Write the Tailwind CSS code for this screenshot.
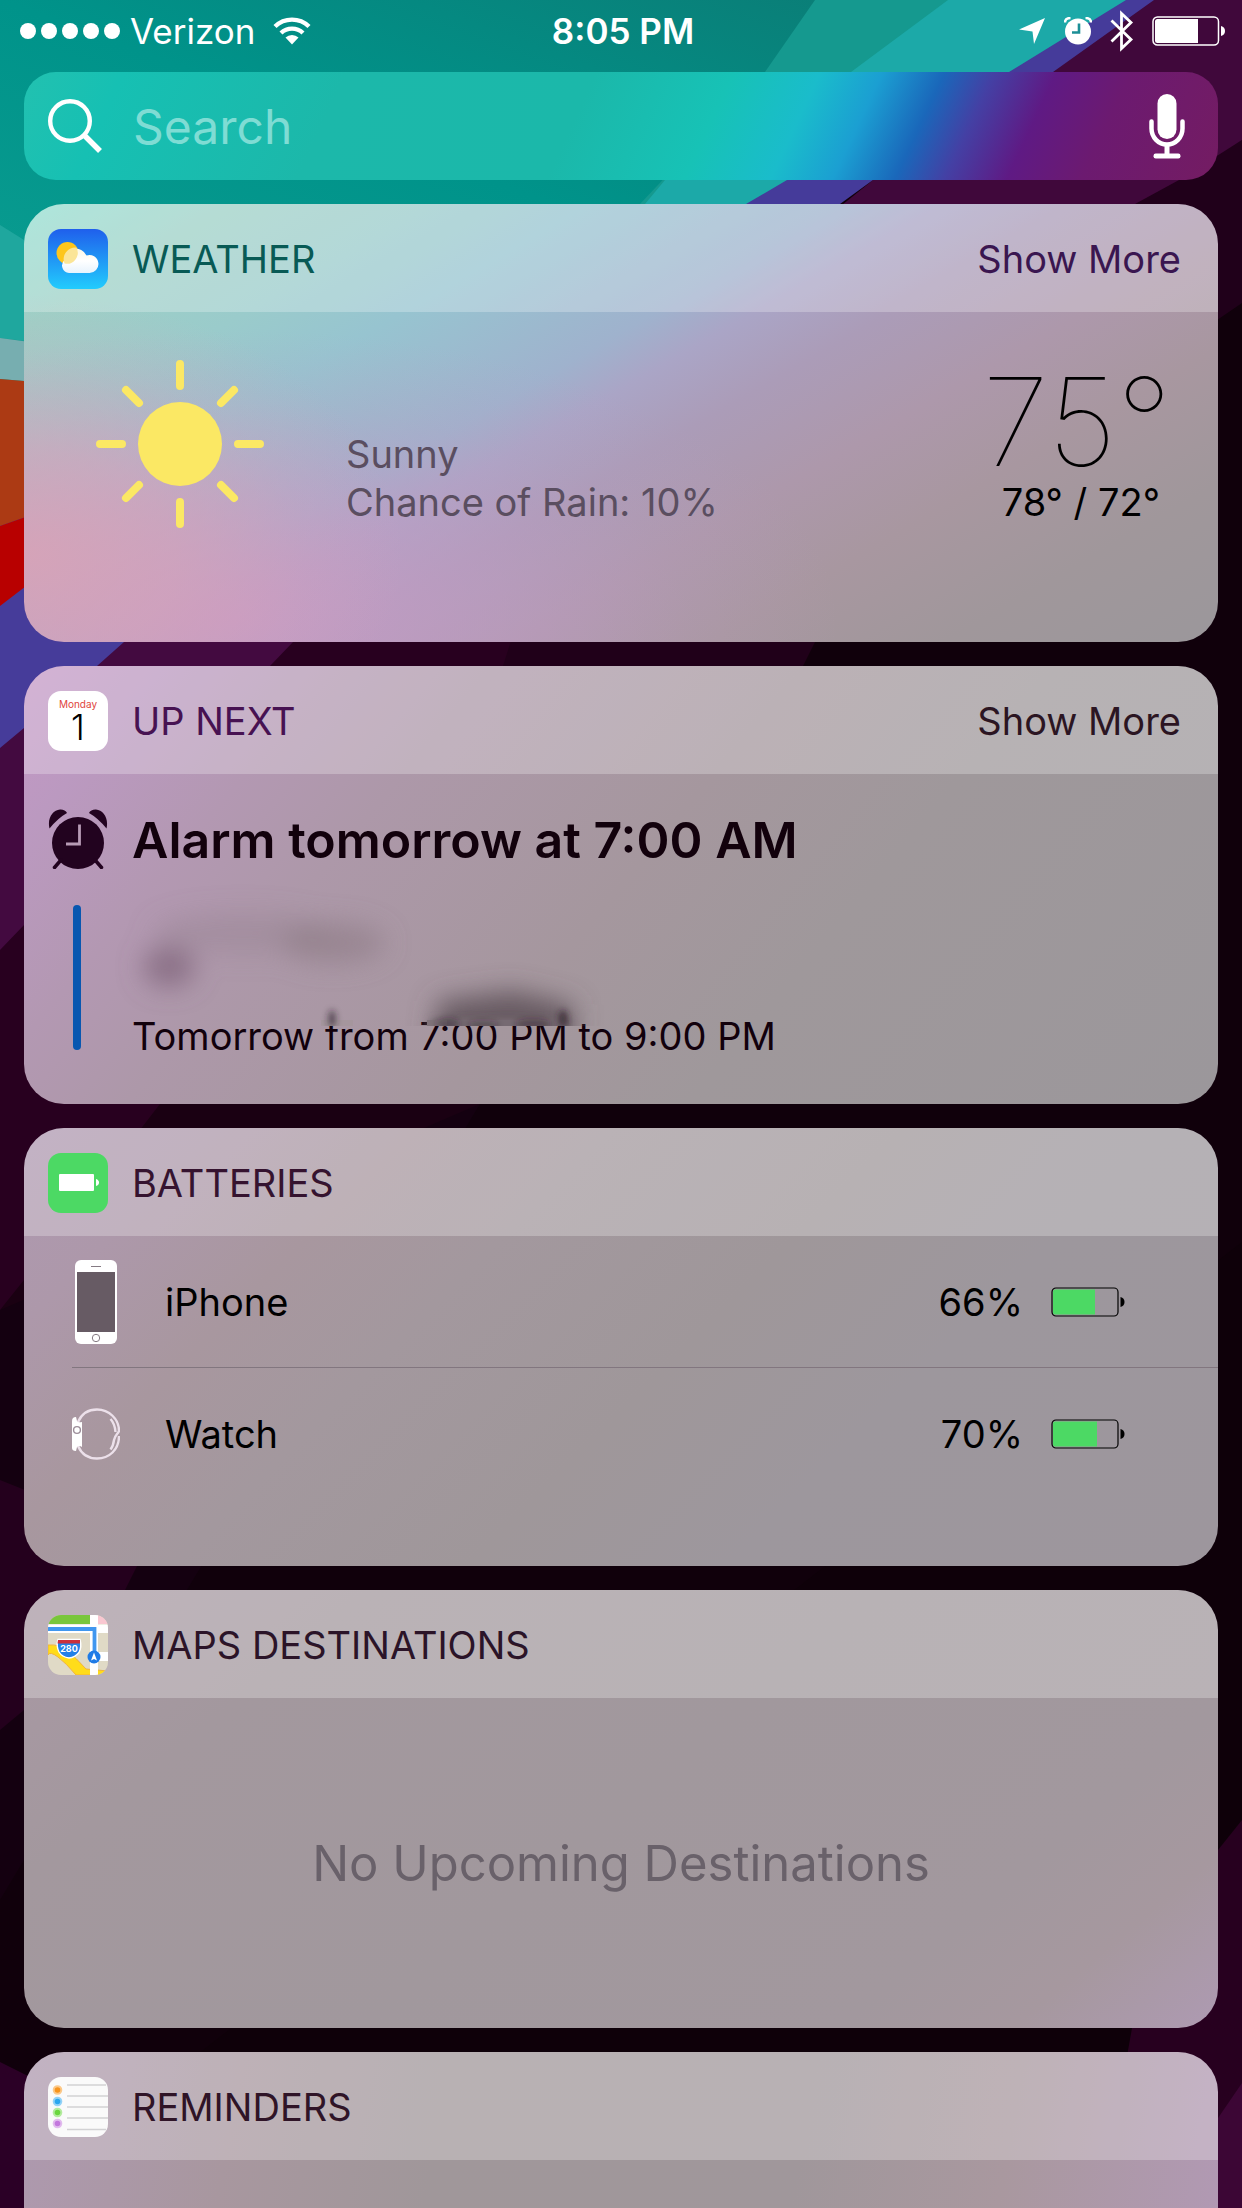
<!DOCTYPE html>
<html lang="en">
<head>
<meta charset="utf-8">
<meta name="viewport" content="width=device-width, initial-scale=1">
<title>Widgets</title>
<script src="https://cdn.jsdelivr.net/npm/@tailwindcss/browser@4"></script>
</head>
<body class="bg-[#0e0009] font-['Inter','Liberation_Sans',sans-serif] text-[38px] leading-[48px] text-black">
<div class="relative isolate flex min-h-screen flex-col overflow-hidden">

  <!-- Wallpaper -->
  <svg class="absolute inset-0 -z-10 h-full w-full" viewBox="0 0 1242 2208" preserveAspectRatio="none" aria-hidden="true">
    <defs>
      <linearGradient id="teal" x1="0" y1="1" x2="1" y2="0"><stop offset="0" stop-color="#0a9c90"/><stop offset=".5" stop-color="#00938a"/><stop offset="1" stop-color="#0a7f78"/></linearGradient>
    </defs>
    <rect width="1242" height="2208" fill="#0e0009"/>
    <path d="M0 0H1242V1242L0 2208Z" fill="#10000b"/>
    <path d="M0 1310 24 1270 140 1104H480L0 1900Z" fill="#140010"/>
    <path d="M0 700H815L803 666 480 1104 0 1310Z" fill="#1a0012"/>
    <path d="M0 500H815L815 642 803 666H500L0 1104Z" fill="#200019"/>
    <path d="M0 600H524L503 666 160 1104 24 1280 0 1310Z" fill="#28001f"/>
    <path d="M0 600H300L293 642 270 666 24 925 0 950Z" fill="#430a40"/>
    <path d="M1242 0V303L1100 400 900 400 1135 203 1242 140Z" fill="#20001a"/>
    <path d="M1100 0H1242V140L1179 180 1135 204 900 400H600L873 180Z" fill="#40083b"/>
    <path d="M1100 0H1154L1053 72 873 180 840 204 400 400V204Z" fill="#453b9a"/>
    <path d="M0 500 400 400 160 610 97 666 24 728 0 748Z" fill="#463c9a"/>
    <path d="M0 0H1126L1009 72 787 180 746 204 400 400H0Z" fill="#1ca9a8"/>
    <path d="M0 0H948L851 72 665 180 645 204 400 400H0Z" fill="#15998f"/>
    <path d="M0 0H815L765 72 640 204 400 300 24 240 0 225Z" fill="url(#teal)"/>
    <path d="M0 225 24 240 60 260V345L0 338Z" fill="#1fa79e"/>
    <path d="M0 338 60 346V384L0 379Z" fill="#77aeb0"/>
    <path d="M0 379 60 384V505L0 526Z" fill="#ac3a14"/>
    <path d="M0 526 60 505V560L0 606Z" fill="#b80000"/>
    <path d="M0 1480 150 1540 125 1590 24 1710 0 1730Z" fill="#24001d"/>
    <path d="M0 2062 40 2082V2208H0Z" fill="#2b0026"/>
    <path d="M1242 1820 1218 1850 1132 2028 1100 2208H1242Z" fill="#27001f"/>
    <path d="M1242 2083 1218 2118 1180 2208H1242Z" fill="#3c0635"/>
  </svg>

  <!-- Status bar -->
  <header class="grid h-[60px] shrink-0 grid-cols-3 items-center pl-5 pr-4 pt-[2px] text-[35px] leading-[44px] text-white">
    <div class="flex items-center">
      <span class="mr-[10px] flex gap-[5px]" role="img" aria-label="Signal strength: five of five">
        <i class="size-4 rounded-full bg-white"></i><i class="size-4 rounded-full bg-white"></i><i class="size-4 rounded-full bg-white"></i><i class="size-4 rounded-full bg-white"></i><i class="size-4 rounded-full bg-white"></i>
      </span>
      <span>Verizon</span>
      <svg class="ml-[18px] h-[28px] w-[38px]" viewBox="0 0 38 28" aria-label="Wi-Fi">
        <g fill="none" stroke="#fff" stroke-width="4.4"><path d="M2 9.500A24.500 24.500 0 0 1 36 9.500"/><path d="M8 16A16 16 0 0 1 30 16"/></g>
        <path fill="#fff" d="M12.500 20.500A9.500 9.500 0 0 1 25.500 20.500L19 27.500Z"/>
      </svg>
    </div>
    <time class="text-center font-semibold">8:05 PM</time>
    <div class="flex items-center justify-end">
      <svg class="mr-[18px] h-[28px] w-[28px]" viewBox="0 0 28 28" aria-label="Location"><path fill="#fff" d="M27 1 16 27 14.500 14.500 1 12.500Z"/></svg>
      <svg class="mr-[18px] h-[28px] w-[28px]" viewBox="0 0 28 28" aria-label="Alarm set">
        <circle cx="14" cy="14.500" r="13" fill="#fff"/>
        <path d="M1 5.500Q1 1 6.500 1M27 5.500Q27 1 21.500 1" fill="none" stroke="#fff" stroke-width="2.500"/>
        <path d="M15 6.500V15.500H8" fill="none" stroke="#1c8f96" stroke-width="2.600"/>
      </svg>
      <svg class="mr-[18px] h-[42px] w-[24px]" viewBox="0 0 24 42" aria-label="Bluetooth"><path d="M1.500 10.500 21 29.500 11.500 38.500V3.500L21 12.500 1.500 31.500" fill="none" stroke="#fff" stroke-width="2.800"/></svg>
      <svg class="h-[30px] w-[74px]" viewBox="0 0 74 30" aria-label="Battery 66%">
        <rect x="1" y="1" width="65.500" height="28" rx="4.500" fill="none" stroke="#fff" stroke-width="1.500"/>
        <path d="M5.500 3H46V27H5.500A2.500 2.500 0 0 1 3 24.500V5.500A2.500 2.500 0 0 1 5.500 3Z" fill="#fff"/>
        <path d="M69 10Q73 11 73 15T69 20Z" fill="#fff"/>
      </svg>
    </div>
  </header>

  <main class="flex grow flex-col gap-6 px-6 pt-3">

    <!-- Search -->
    <form role="search" class="flex h-[108px] items-center rounded-[32px] bg-[linear-gradient(115deg,#22c1b0_0%,#16c0b3_8%,#1cb8aa_26%,#1bb8aa_46%,#17c2b6_57%,#1abccb_64%,#1b9fd2_69%,#1a67ba_74%,#4440a4_78%,#5f1a84_83%,#6c1a70_89%,#741c62_100%)] pl-6 pr-[33px]">
      <label for="q" class="mr-[31px]">
        <svg class="h-[54px] w-[54px]" viewBox="0 0 54 54" aria-label="Search"><circle cx="22" cy="22" r="19.800" fill="none" stroke="#fff" stroke-width="4.400"/><path d="M36.500 36.500 52 52" stroke="#fff" stroke-width="5.500"/></svg>
      </label>
      <input id="q" type="search" placeholder="Search" class="min-w-0 grow bg-transparent pt-[2px] text-[48px] leading-[64px] text-white outline-none placeholder:text-[#7fdcd4]">
      <button type="button" aria-label="Dictate">
        <svg class="h-[66px] w-[36px]" viewBox="0 0 36 66"><rect x="8.500" y="1" width="19" height="45" rx="9.500" fill="#fff"/><path d="M2.500 28.500V35.500A15.500 16 0 0 0 33.500 35.500V28.500" fill="none" stroke="#fff" stroke-width="4.500" stroke-linecap="round"/><path d="M18 52V62" stroke="#fff" stroke-width="5"/><rect x="4.500" y="60.500" width="27" height="5" rx="2.200" fill="#fff"/></svg>
      </button>
    </form>

    <!-- Weather -->
    <section class="flex flex-col overflow-hidden rounded-[40px] bg-[radial-gradient(ellipse_380px_260px_at_0_80%,#dba2b6dd_0%,#daa3b899_40%,#d8a4bb33_75%,#d8a4bb00_100%),radial-gradient(ellipse_600px_290px_at_18%_95%,#c49bc4_0%,#c09cc499_40%,#bb9dc033_75%,#bb9dc000_100%),linear-gradient(150deg,#93ded0_0%,#9dd0c6_11%,#9acbcb_21%,#97c4d0_29%,#9fb2cd_42%,#aaa5c6_47%,#ab9cb8_54%,#ad98ab_64%,#a897a0_74%,#a0979b_86%,#9b979b_100%)]">
      <div class="flex h-[108px] items-center bg-white/25 px-6 pt-[2px]">
        <svg class="mr-6 size-[60px]" viewBox="0 0 60 60" aria-hidden="true">
          <defs>
            <linearGradient id="sky" x1="0" y1="0" x2="0" y2="1"><stop offset="0" stop-color="#1f5fec"/><stop offset="1" stop-color="#22ccfd"/></linearGradient>
            <linearGradient id="cloud" x1="0" y1="0" x2="0" y2="1"><stop offset="0" stop-color="#fdf8e4"/><stop offset=".5" stop-color="#fff"/><stop offset="1" stop-color="#e8f3fd"/></linearGradient>
          </defs>
          <rect width="60" height="60" rx="13" fill="url(#sky)"/>
          <circle cx="19.500" cy="24" r="11" fill="#fdc61c"/>
          <path d="M21 44A7.500 7.500 0 0 1 16.500 31A11.500 11.500 0 0 1 38.500 26.500A9 9 0 1 1 41 44Z" fill="url(#cloud)"/>
          <path d="M16.500 34.500A11.500 11.500 0 0 1 28.500 18.700 11 11 0 0 1 16.500 34.500Z" fill="#fbe597"/>
        </svg>
        <h2 class="grow text-[#085a55]">WEATHER</h2>
        <button type="button" class="mr-[13px] text-[#3a1650]">Show More</button>
      </div>
      <div class="flex h-[330px] pl-[72px] pr-[46px] pt-12">
        <svg class="size-[168px]" viewBox="0 0 168 168" aria-hidden="true">
          <circle cx="84" cy="84" r="42" fill="#fbe864"/>
          <path d="M84 4V26M84 142V164M4 84H26M142 84H164M30 30 43 43M125 125 138 138M138 30 125 43M43 125 30 138" stroke="#fbe864" stroke-width="8" stroke-linecap="round"/>
        </svg>
        <div class="ml-[82px] grow pt-[70px] text-[#5a4e60]">
          <p>Sunny</p>
          <p>Chance of Rain: 10%</p>
        </div>
        <div class="flex flex-col items-end pt-[6px]">
          <p class="text-[122px] font-thin leading-[112px]">75°</p>
          <p class="mr-3">78° / 72°</p>
        </div>
      </div>
    </section>

    <!-- Up next -->
    <section class="flex flex-col overflow-hidden rounded-[40px] bg-[linear-gradient(130deg,#c598c6_0%,#bb99c0_9%,#b398b2_20%,#ad98a9_30%,#a5979e_50%,#9f989b_66%,#9b979b_100%)]">
      <div class="flex h-[108px] items-center bg-white/25 px-6 pt-[2px]">
        <div class="mr-6 flex size-[60px] flex-col items-center rounded-[13px] bg-white pt-[7px]" aria-hidden="true">
          <span class="text-[10px] leading-[13px] text-[#e0453c]">Monday</span>
          <span class="text-[35px] font-light leading-[32px]">1</span>
        </div>
        <h2 class="grow text-[#471252]">UP NEXT</h2>
        <button type="button" class="mr-[13px] text-[#2b1522]">Show More</button>
      </div>
      <div class="h-[330px] pl-6 pt-[35px]">
        <div class="flex h-[60px] items-center">
          <svg class="mr-6 size-[60px]" viewBox="0 0 60 60" aria-hidden="true">
            <g fill="#22031f"><circle cx="30" cy="34" r="26"/><path d="M1.500 19.500C-1 9 5 1 12 .5 15 .3 18 1.500 19 4Q10 9 1.500 19.500ZM58.500 19.500C61 9 55 1 48 .5 45 .3 42 1.500 41 4Q50 9 58.500 19.500Z"/></g>
            <path d="M13 51 6.500 58.500M47 51 53.500 58.500" stroke="#22031f" stroke-width="3.500" stroke-linecap="round"/>
            <path d="M31.500 15.500V35H18" fill="none" stroke="#b79bb5" stroke-width="2.800"/>
          </svg>
          <h3 class="pt-[2px] text-[50px] font-semibold leading-[60px] text-[#12010c]">Alarm tomorrow at 7:00 AM</h3>
        </div>
        <div class="relative mt-9 flex h-[145px] items-end pl-[25px]">
          <div class="h-full w-2 rounded-full bg-[#0857b0]"></div>
          <p class="-mb-[10px] ml-[51px] text-[#12010c]">Tomorrow from 7:00 PM to 9:00 PM</p>
          <!-- Redacted event name -->
          <svg class="absolute left-[85px] top-0 h-[126px] w-[480px] overflow-visible" viewBox="0 0 480 126" aria-hidden="true">
            <defs>
              <filter id="wide" x="-60%" y="-90%" width="220%" height="280%"><feGaussianBlur stdDeviation="13"/></filter>
              <filter id="tight" x="-60%" y="-90%" width="220%" height="280%"><feGaussianBlur stdDeviation="3"/></filter>
              <clipPath id="above"><rect x="-60" y="-60" width="600" height="181"/></clipPath>
            </defs>
            <g clip-path="url(#above)">
              <g filter="url(#wide)">
                <ellipse cx="36" cy="62" rx="26" ry="20" fill="#7d6479" opacity=".75"/>
                <ellipse cx="110" cy="28" rx="90" ry="20" fill="#93808e" opacity=".4"/>
                <ellipse cx="200" cy="38" rx="52" ry="20" fill="#8d7b85" opacity=".6"/>
                <path d="M305 96 380 86 440 100V140H300Z" fill="#5f535b" opacity=".9"/>
              </g>
              <rect x="188" y="115" width="32" height="6" fill="#a5969d"/>
              <rect x="296" y="114" width="142" height="10" rx="4" fill="#7a6e76" filter="url(#tight)"/>
              <rect x="294" y="115" width="22" height="6" fill="#807379"/>
              <rect x="314" y="115" width="122" height="6" fill="#766a72"/>
              <g filter="url(#tight)" fill="#2a1a26"><ellipse cx="199" cy="114" rx="4" ry="9" opacity=".6"/><ellipse cx="315" cy="119" rx="12" ry="6" opacity=".4"/><ellipse cx="350" cy="120" rx="16" ry="4" opacity=".35"/><ellipse cx="400" cy="119" rx="18" ry="5" opacity=".45"/><ellipse cx="430" cy="114" rx="5" ry="9" opacity=".65"/></g>
            </g>
          </svg>
        </div>
      </div>
    </section>

    <!-- Batteries -->
    <section class="flex flex-col overflow-hidden rounded-[40px] bg-[linear-gradient(135deg,#af99b1_0%,#ad98aa_12%,#a8979f_24%,#a3989e_36%,#9f979a_54%,#9d979d_70%,#9d969d_100%)]">
      <div class="flex h-[108px] items-center bg-white/25 px-6 pt-[2px]">
        <svg class="mr-6 size-[60px]" viewBox="0 0 60 60" aria-hidden="true"><rect width="60" height="60" rx="13" fill="#4cd964"/><rect x="11" y="21" width="35" height="17" rx="1" fill="#fff"/><path d="M48 26Q51 27 51 29.500T48 33Z" fill="#fff"/></svg>
        <h2 class="grow text-[#35132f]">BATTERIES</h2>
      </div>
      <ul class="ml-12 h-[330px]">
        <li class="flex h-[132px] items-center border-b border-[#82767f] pr-[93px]">
          <svg class="mr-[45px] h-[84px] w-[48px]" viewBox="0 0 48 84" aria-hidden="true"><rect x="3" width="42" height="84" rx="6" fill="#fff"/><rect x="5" y="12" width="38" height="60" fill="#675b64"/><path d="M19 6.500H29" stroke="#857b83" stroke-width="1"/><circle cx="24" cy="78" r="3.700" fill="none" stroke="#857b83" stroke-width="1"/></svg>
          <span class="grow">iPhone</span>
          <span class="mr-7">66%</span>
          <svg class="h-[30px] w-[74px]" viewBox="0 0 74 30" aria-hidden="true"><rect x="1" y="1" width="66" height="28" rx="4" fill="none" stroke="#000" stroke-width="1.200"/><path d="M4 2.500H44V27.500H4A2 2 0 0 1 2 25.500V4.500A2 2 0 0 1 4 2.500Z" fill="#4cd964"/><path d="M69.500 10Q73.500 11 73.500 15T69.500 20Z"/></svg>
        </li>
        <li class="flex h-[132px] items-center pr-[93px]">
          <svg class="mr-[45px] h-[52px] w-[48px]" viewBox="0 0 48 52" aria-hidden="true">
            <g fill="none" stroke="#ece0ea" stroke-width="2.400"><path d="M6 14C10 5 17 1.500 25 1.500 37 1.500 47 11 47 23 46 26 43 27 42 32 41.500 36 40.500 39 38.500 41.500"/><path d="M6 38C10 47 17 50.500 25 50.500 37 50.500 47 42 47 28"/><path d="M38.500 11Q43 16 43.500 24"/></g>
            <path d="M0 13Q0 9 4 9L5 13Q6 15 10 14V39Q7 37 5 39L4 43Q0 43 0 40Z" fill="#fff"/><circle cx="5" cy="22" r="3.400" fill="#fff" stroke="#9d8e9a" stroke-width="1.400"/>
          </svg>
          <span class="grow">Watch</span>
          <span class="mr-7">70%</span>
          <svg class="h-[30px] w-[74px]" viewBox="0 0 74 30" aria-hidden="true"><rect x="1" y="1" width="66" height="28" rx="4" fill="none" stroke="#000" stroke-width="1.200"/><path d="M4 2.500H46V27.500H4A2 2 0 0 1 2 25.500V4.500A2 2 0 0 1 4 2.500Z" fill="#4cd964"/><path d="M69.500 10Q73.500 11 73.500 15T69.500 20Z"/></svg>
        </li>
      </ul>
    </section>

    <!-- Maps destinations -->
    <section class="flex flex-col overflow-hidden rounded-[40px] bg-[linear-gradient(140deg,#a998a4_0%,#a3989e_20%,#a1989d_50%,#a2989e_78%,#a6989f_88%,#ae9ab2_100%)]">
      <div class="flex h-[108px] items-center bg-white/25 px-6 pt-[2px]">
        <svg class="mr-6 size-[60px]" viewBox="0 0 60 60" aria-hidden="true">
          <defs><clipPath id="tile"><rect width="60" height="60" rx="13"/></clipPath></defs>
          <g clip-path="url(#tile)">
            <rect width="60" height="60" fill="#e0dac6"/>
            <path d="M0 0H42V9H0Z" fill="#79c63b"/><path d="M50 0H60V9H50Z" fill="#f9c7d1"/>
            <path d="M0 30Q12 29 20 36T38 54L60 56V60H28Q18 48 10 42T0 40Z" fill="#ffdc1a" stroke="#f2b33c" stroke-width="1"/>
            <path d="M0 9.500H60V18H0ZM42 0H50V60H42ZM50 37H60V46H50Z" fill="#fff"/>
            <path d="M0 14H46.500V40" fill="none" stroke="#4197ef" stroke-width="3.800"/>
            <path d="M10 24.500H32Q34 32 31 37.500 27 42.500 21 43 14 42 11 37 8 31 10 24.500Z" fill="#2380e8" stroke="#fff" stroke-width="1.400"/>
            <path d="M10 25H32V28.500H9.500Z" fill="#c9303d"/>
            <circle cx="46" cy="42" r="6.500" fill="#1f7be6"/><path d="M46 37.500 49 45.500 46 44 43 45.500Z" fill="#fff"/>
            <text x="21" y="37" text-anchor="middle" font-family="Inter" font-size="9" font-weight="700" fill="#fff">280</text>
          </g>
        </svg>
        <h2 class="grow text-[#2b1428]">MAPS DESTINATIONS</h2>
      </div>
      <div class="flex h-[330px] items-center justify-center">
        <p class="pt-[2px] text-[49px] leading-[60px] text-[#69616a]">No Upcoming Destinations</p>
      </div>
    </section>

    <!-- Reminders -->
    <section class="flex min-h-[156px] grow flex-col overflow-hidden rounded-t-[40px] bg-[linear-gradient(100deg,#ae99af_0%,#a8979f_18%,#a0979a_35%,#a0979b_65%,#a9989f_82%,#b199b3_100%)]">
      <div class="flex h-[108px] items-center bg-white/25 px-6 pt-[2px]">
        <svg class="mr-6 size-[60px]" viewBox="0 0 60 60" aria-hidden="true">
          <rect width="60" height="60" rx="13" fill="#fafafa"/>
          <path d="M19 8H58M19 19H60M19 30H60M19 41H60M19 52.500H58" stroke="#d2d2d4" stroke-width="1.600"/>
          <g stroke-width="2"><circle cx="9.500" cy="13" r="3.800" fill="#f7941d" stroke="#fbc98a"/><circle cx="9.500" cy="24.500" r="3.800" fill="#2ba6ef" stroke="#93d2f7"/><circle cx="9.500" cy="35.500" r="3.800" fill="#6bd63f" stroke="#b4eb9f"/><circle cx="9.500" cy="46.500" r="3.800" fill="#c377dd" stroke="#e1bbee"/></g>
        </svg>
        <h2 class="grow text-[#2f1427]">REMINDERS</h2>
      </div>
    </section>
  </main>
</div>
</body>
</html>
